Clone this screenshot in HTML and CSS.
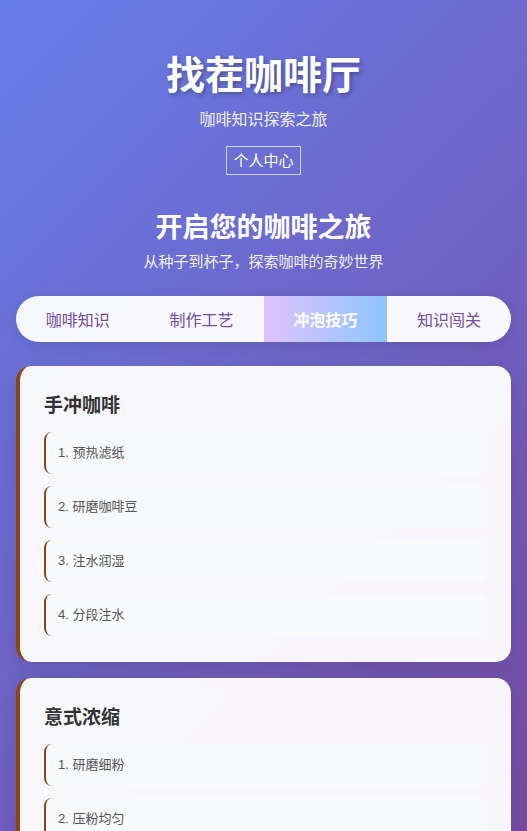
FILE: index.html
```html
<!DOCTYPE html>
<html lang="zh-CN">
<head>
<meta charset="UTF-8" />
<meta name="viewport" content="width=device-width, initial-scale=1.0"/>
<title>找茬咖啡厅</title>
<link rel="stylesheet" href="styles.css">
</head>
<body>

<div class="container">
    <header class="site-header">
        <h1>找茬咖啡厅</h1>
        <p class="tagline">咖啡知识探索之旅</p>
        <button class="profile-button">个人中心</button>
    </header>

    <section class="intro">
        <h2>开启您的咖啡之旅</h2>
        <p>从种子到杯子，探索咖啡的奇妙世界</p>
    </section>

    <nav class="tabs">
        <button class="tab">咖啡知识</button>
        <button class="tab">制作工艺</button>
        <button class="tab active">冲泡技巧</button>
        <button class="tab">知识闯关</button>
    </nav>

    <div class="card">
        <h3>手冲咖啡</h3>
        <div class="step">1. 预热滤纸</div>
        <div class="step">2. 研磨咖啡豆</div>
        <div class="step">3. 注水润湿</div>
        <div class="step">4. 分段注水</div>
    </div>

    <div class="card">
        <h3>意式浓缩</h3>
        <div class="step">1. 研磨细粉</div>
        <div class="step">2. 压粉均匀</div>
        <div class="step">3. 萃取浓缩</div>
        <div class="step">4. 观察油脂</div>
    </div>
</div>

</body>
</html>
```

FILE: styles.css
```css
:root {
    --font-family: "Liberation Sans", "Noto Sans CJK SC", sans-serif;
    --coffee: #8b4513;
    --purple: #764ba2;
    --card-bg: rgba(255, 255, 255, 0.95);
}

body {
    margin: 0;
    min-height: 100vh;
    font-family: var(--font-family);
    background: linear-gradient(135deg, #667eea 0%, #764ba2 100%);
    background-attachment: fixed;
    color: #333;
}

.container {
    padding: 0 16px 20px;
}

.site-header {
    text-align: center;
    color: #fff;
    padding-top: 50px;
}

.site-header h1 {
    margin: 0;
    font-size: 39px;
    line-height: 52px;
    font-weight: 700;
    text-shadow: 2px 2px 4px rgba(0, 0, 0, 0.3);
}

.tagline {
    margin: 6px 0 0;
    font-size: 16px;
    line-height: 24px;
    opacity: 0.9;
}

.profile-button {
    margin-top: 14px;
    padding: 3px 6px;
    font-family: var(--font-family);
    font-size: 15px;
    line-height: 21px;
    color: #fff;
    background: transparent;
    border: 1px solid rgba(255, 255, 255, 0.7);
    cursor: pointer;
}

.intro {
    text-align: center;
    color: #fff;
    margin-top: 34px;
}

.intro h2 {
    margin: 0;
    font-size: 27px;
    line-height: 38px;
    font-weight: 700;
}

.intro p {
    margin: 4px 0 0;
    font-size: 15px;
    line-height: 22px;
    opacity: 0.9;
}

.tabs {
    display: grid;
    grid-template-columns: repeat(4, 1fr);
    margin-top: 23px;
    height: 46px;
    background: var(--card-bg);
    border-radius: 23px;
    overflow: hidden;
    box-shadow: 0 4px 15px rgba(0, 0, 0, 0.1);
}

.tab {
    border: none;
    background: transparent;
    font-family: var(--font-family);
    font-size: 16px;
    color: var(--purple);
    cursor: pointer;
}

.tab.active {
    background: linear-gradient(90deg, #e0c3fc 0%, #8ec5fc 100%);
    color: #fff;
    font-weight: 700;
}

.card {
    margin-top: 24px;
    padding: 24px 24px 26px;
    background: var(--card-bg);
    border-radius: 15px;
    border-left: 4px solid var(--coffee);
    box-shadow: 0 8px 25px rgba(0, 0, 0, 0.1);
}

.card + .card {
    margin-top: 16px;
}

.card h3 {
    margin: 0 0 10px;
    font-size: 19px;
    line-height: 32px;
    font-weight: 700;
    color: #333;
}

.step {
    margin-top: 12px;
    padding: 0 12px;
    height: 42px;
    line-height: 42px;
    font-size: 13px;
    color: #555;
    background: #f8f9fa;
    border-left: 2px solid var(--coffee);
    border-radius: 8px;
}

.card h3 + .step {
    margin-top: 0;
}
```
